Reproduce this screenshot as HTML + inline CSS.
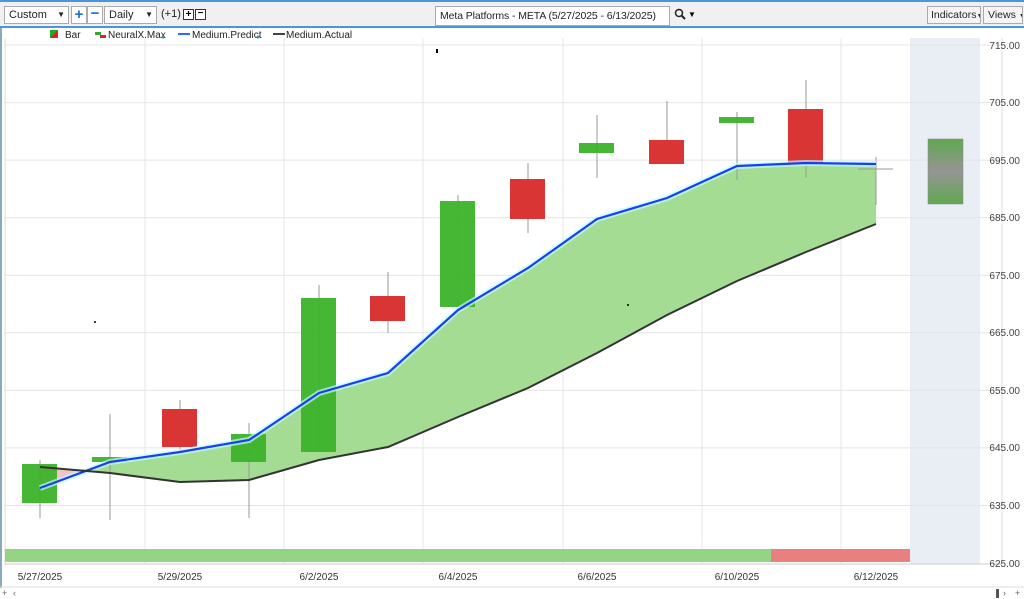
<!DOCTYPE html>
<html><head><style>
body{margin:0;width:1024px;height:599px;overflow:hidden;background:#fff;font-family:"Liberation Sans",sans-serif;}
.tb{position:absolute;left:0;top:0;width:1024px;background:#f0f0f0;border-top:2px solid #4a95dc;box-sizing:border-box;border-bottom:2px solid #4a95dc;height:28px}
.b{position:absolute;font-size:11px;color:#222;background:#fff;border:1px solid #aaa;box-sizing:border-box;height:18px;line-height:16px;padding-left:4px;white-space:nowrap;overflow:hidden}
</style></head><body>
<div class="tb"></div>
<div class="b" style="left:4px;top:6px;width:65px">Custom<span style="position:absolute;right:3px;font-size:8px">▼</span></div>
<div style="position:absolute;left:71px;top:6px;width:14px;height:16px;border:1px solid #aaa;background:#fff;color:#1a6fd0;font-weight:bold;font-size:15px;line-height:15px;text-align:center">+</div>
<div style="position:absolute;left:87px;top:6px;width:14px;height:16px;border:1px solid #aaa;background:#fff;color:#1a6fd0;font-weight:bold;font-size:15px;line-height:14px;text-align:center">−</div>
<div class="b" style="left:104px;top:6px;width:53px">Daily<span style="position:absolute;right:3px;font-size:8px">▼</span></div>
<div style="position:absolute;left:161px;top:8px;font-size:11px;color:#222">(+1)</div>
<div style="position:absolute;left:183px;top:9px;width:9px;height:9px;border:1px solid #333;background:#fff;font-size:10px;line-height:9px;text-align:center;font-weight:bold">+</div>
<div style="position:absolute;left:195px;top:9px;width:9px;height:9px;border:1px solid #333;background:#fff;font-size:10px;line-height:8px;text-align:center;font-weight:bold">−</div>
<div class="b" style="left:435px;top:6px;width:235px;height:20px;line-height:18px;font-size:10.5px;letter-spacing:-0.1px">Meta Platforms - META (5/27/2025 - 6/13/2025)</div>
<svg style="position:absolute;left:674px;top:8px" width="12" height="12"><circle cx="5" cy="5" r="3.5" fill="none" stroke="#222" stroke-width="1.5"/><line x1="7.5" y1="7.5" x2="11" y2="11" stroke="#222" stroke-width="2"/></svg>
<div style="position:absolute;left:688px;top:10px;font-size:8px">▼</div>
<div class="b" style="left:927px;top:6px;width:54px;background:#f5f5f5;padding-left:3px;font-size:10.5px">Indicators<span style="font-size:7px">▼</span></div>
<div class="b" style="left:983px;top:6px;width:40px;background:#f5f5f5;font-size:10.5px">Views <span style="font-size:7px">▼</span></div>
<div style="position:absolute;left:0;top:28px;width:2px;height:560px;background:#8ab"></div>
<svg width="1024" height="599" style="position:absolute;left:0;top:0" font-family="Liberation Sans" font-size="10">
<rect x="910" y="38" width="70" height="526" fill="#e9eef5"/>
<g stroke="#e4e4e4" stroke-width="1">
<line x1="5" x2="1002" y1="45" y2="45"/><line x1="5" x2="1002" y1="102.6" y2="102.6"/><line x1="5" x2="1002" y1="160.1" y2="160.1"/><line x1="5" x2="1002" y1="217.7" y2="217.7"/><line x1="5" x2="1002" y1="275.2" y2="275.2"/><line x1="5" x2="1002" y1="332.8" y2="332.8"/><line x1="5" x2="1002" y1="390.4" y2="390.4"/><line x1="5" x2="1002" y1="447.9" y2="447.9"/><line x1="5" x2="1002" y1="505.5" y2="505.5"/>
<line x1="145" x2="145" y1="38" y2="564"/><line x1="284" x2="284" y1="38" y2="564"/><line x1="423" x2="423" y1="38" y2="564"/><line x1="563" x2="563" y1="38" y2="564"/><line x1="702" x2="702" y1="38" y2="564"/><line x1="841" x2="841" y1="38" y2="564"/>
</g>
<line x1="5" x2="5" y1="38" y2="566" stroke="#ddd"/>
<line x1="1002" x2="1002" y1="38" y2="566" stroke="#ddd"/>
<line x1="5" x2="1002" y1="564" y2="564" stroke="#ccc"/>
<polygon points="40,467 85,470 40,488" fill="#f2c4c4"/>
<polygon points="85,470 110,462 180,452 249,440 319,393 388,373 458,310 528,268 597,219 667,198 737,166 806,163 876,164 876,224 806,252 737,281 667,315 597,353 528,388 458,417 388,447 319,460 249,480 180,482 110,473" fill="#a4dc94"/>
<g stroke="#999" stroke-width="1">
<line x1="40" x2="40" y1="460" y2="518"/><line x1="110" x2="110" y1="414" y2="520"/><line x1="180" x2="180" y1="400" y2="452"/><line x1="249" x2="249" y1="423" y2="518"/><line x1="319" x2="319" y1="285" y2="452"/><line x1="388" x2="388" y1="272" y2="333"/><line x1="458" x2="458" y1="195" y2="310"/><line x1="528" x2="528" y1="163" y2="233"/><line x1="597" x2="597" y1="115" y2="178"/><line x1="667" x2="667" y1="101" y2="164"/><line x1="737" x2="737" y1="112" y2="180"/><line x1="806" x2="806" y1="80" y2="178"/><line x1="876" x2="876" y1="157" y2="205"/><line x1="858" x2="893" y1="169" y2="169"/>
</g>
<g fill="#3cb22a" fill-opacity="0.95">
<rect x="22" y="464" width="35" height="39"/><rect x="92" y="457" width="35" height="5"/><rect x="231" y="434" width="35" height="28"/><rect x="301" y="298" width="35" height="154"/><rect x="440" y="201" width="35" height="106"/><rect x="579" y="143" width="35" height="10"/><rect x="719" y="117" width="35" height="6"/>
</g>
<g fill="#d93535">
<rect x="162" y="409" width="35" height="38"/><rect x="370" y="296" width="35" height="25"/><rect x="510" y="179" width="35" height="40"/><rect x="649" y="140" width="35" height="24"/><rect x="788" y="109" width="35" height="55"/>
</g>
<defs><linearGradient id="g" x1="0" y1="0" x2="0" y2="1"><stop offset="0" stop-color="#5fa84f"/><stop offset=".5" stop-color="#959595"/><stop offset="1" stop-color="#5fa84f"/></linearGradient></defs>
<rect x="928" y="139" width="35" height="65" fill="url(#g)" stroke="#888" stroke-width=".5"/>
<polyline points="40,488 110,462 180,452 249,440 319,393 388,373 458,310 528,268 597,219 667,198 737,166 806,163 876,164" fill="none" stroke="#bff" stroke-width="6" opacity=".7"/>
<polyline points="40,488 110,462 180,452 249,440 319,393 388,373 458,310 528,268 597,219 667,198 737,166 806,163 876,164" fill="none" stroke="#1f3cf0" stroke-width="2.2"/>
<polyline points="40,467 110,473 180,482 249,480 319,460 388,447 458,417 528,388 597,353 667,315 737,281 806,252 876,224" fill="none" stroke="#333" stroke-width="2"/>
<rect x="5" y="549" width="766" height="13" fill="#94d484"/>
<rect x="771" y="549" width="139" height="13" fill="#e88080"/>
<g fill="#444" font-size="10" text-anchor="end">
<text x="1020" y="49">715.00</text><text x="1020" y="106">705.00</text><text x="1020" y="164">695.00</text><text x="1020" y="221">685.00</text><text x="1020" y="279">675.00</text><text x="1020" y="336">665.00</text><text x="1020" y="394">655.00</text><text x="1020" y="451">645.00</text><text x="1020" y="509">635.00</text><text x="1020" y="567">625.00</text>
</g>
<g fill="#333" font-size="10" text-anchor="middle">
<text x="40" y="580">5/27/2025</text><text x="180" y="580">5/29/2025</text><text x="319" y="580">6/2/2025</text><text x="458" y="580">6/4/2025</text><text x="597" y="580">6/6/2025</text><text x="737" y="580">6/10/2025</text><text x="876" y="580">6/12/2025</text>
</g>
<rect x="50" y="30" width="8" height="8" fill="#2a2"/><polygon points="58,30 58,38 50,38" fill="#d22"/>
<text x="65" y="38" fill="#222">Bar</text>
<rect x="95" y="32" width="6" height="3" fill="#3a3"/><rect x="100" y="35" width="6" height="3" fill="#d22"/>
<text x="108" y="38" fill="#222">NeuralX.Max</text><circle cx="163" cy="37" r="1.5" fill="#48a"/>
<rect x="178" y="33" width="12" height="2" fill="#36f"/><text x="192" y="38" fill="#222">Medium.Predict</text><circle cx="258" cy="37" r="1.5" fill="#48a"/>
<rect x="273" y="33" width="12" height="2" fill="#444"/><text x="286" y="38" fill="#222">Medium.Actual</text>
<rect x="436" y="49" width="2" height="4" fill="#000"/>
<circle cx="95" cy="322" r="1" fill="#000"/><circle cx="628" cy="305" r="1" fill="#000"/>
<line x1="0" x2="1024" y1="587" y2="587" stroke="#ddd"/>
<text x="2" y="596" font-size="9" fill="#666">+</text><text x="13" y="596" font-size="9" fill="#666">‹</text>
<rect x="996" y="589" width="3" height="9" fill="#555"/><text x="1003" y="596" font-size="9" fill="#666">›</text><text x="1015" y="596" font-size="9" fill="#666">+</text>
</svg>
</body></html>
